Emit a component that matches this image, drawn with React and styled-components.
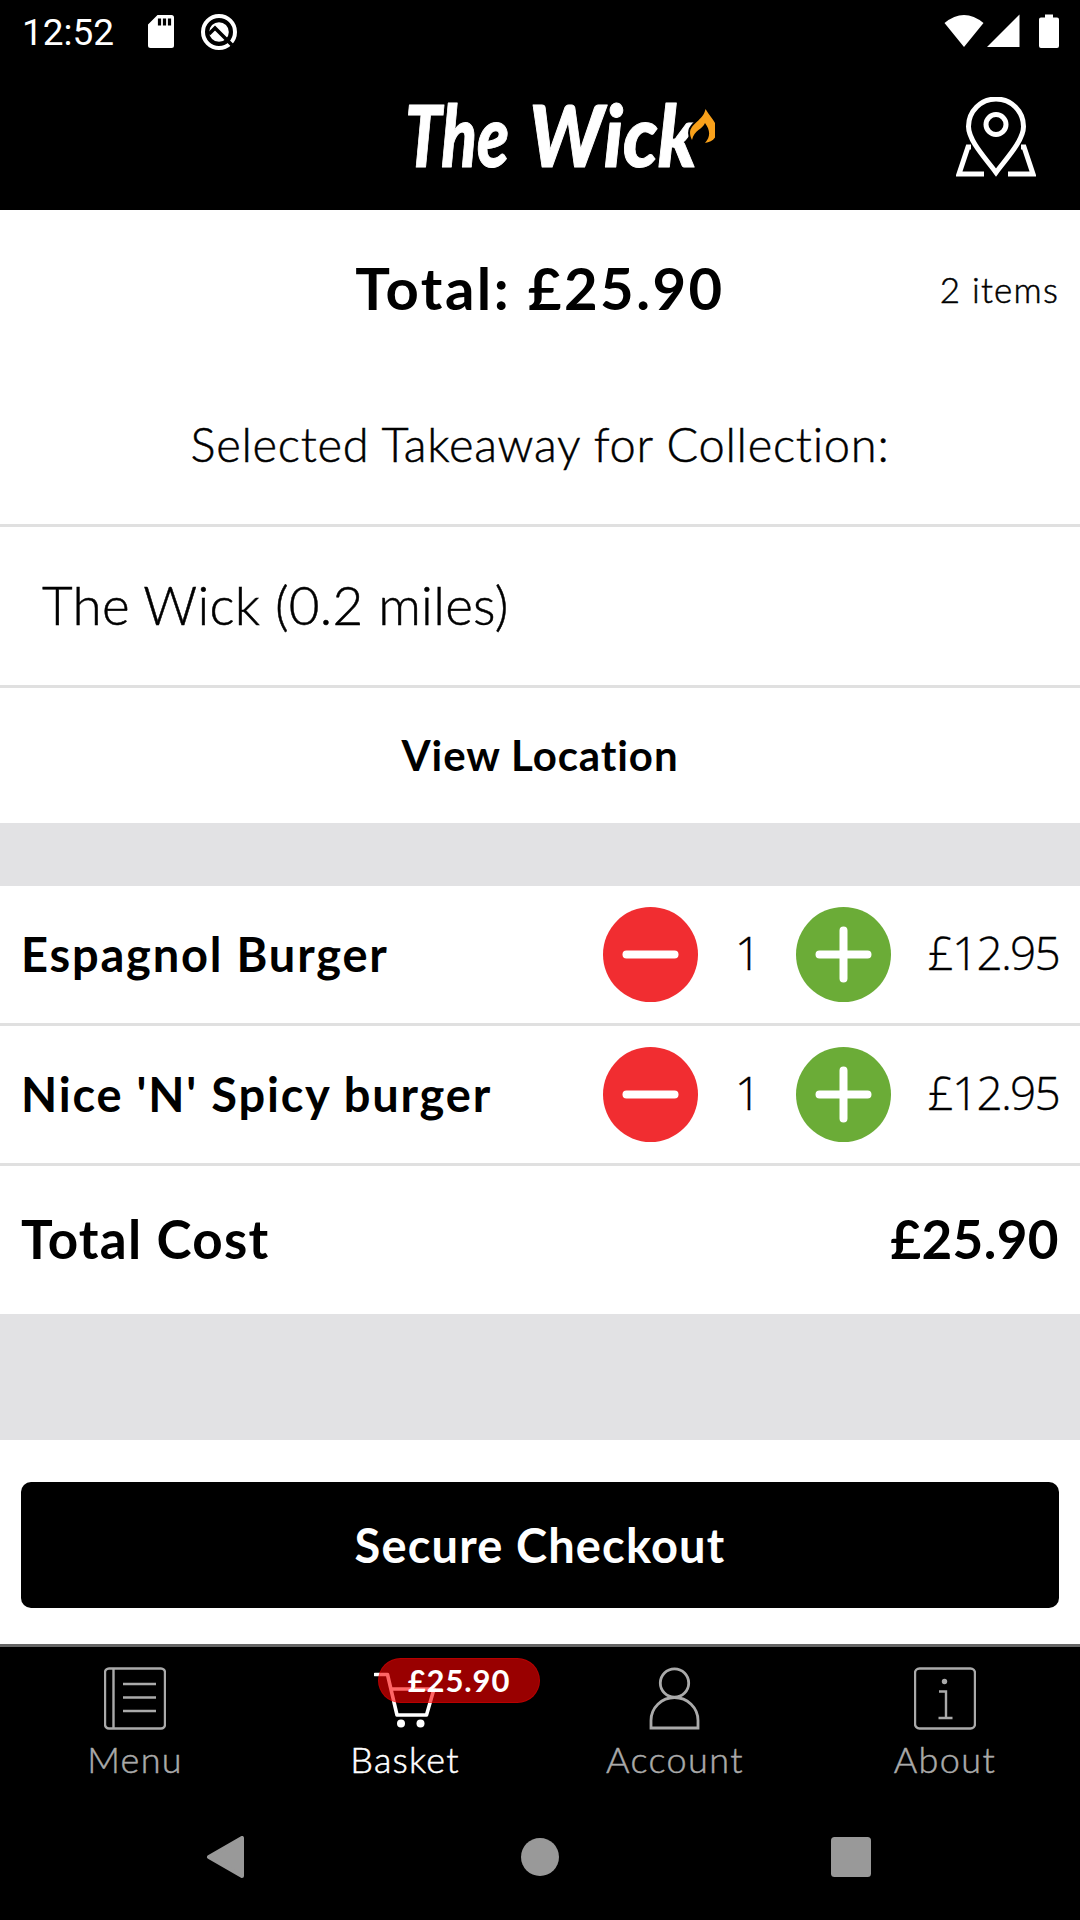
import React from "react";
import styled, { createGlobalStyle } from "styled-components";

const GlobalStyle = createGlobalStyle`
  * {
    box-sizing: border-box;
  }

  body {
    margin: 0;
    background: #000;
    color: #000;
    font-family: Lato, "Open Sans", sans-serif;
  }

  button {
    border: 0;
    padding: 0;
    font-family: inherit;
  }
`;

const Screen = styled.div`
  display: flex;
  flex-direction: column;
  width: 1080px;
  height: 1920px;
  background: #fff;
  overflow: hidden;
`;

const StatusBar = styled.div`
  display: flex;
  align-items: center;
  justify-content: space-between;
  height: 63px;
  padding: 0 21px 0 22px;
  background: #000;
  color: #fff;
`;

const StatusGroup = styled.div`
  display: flex;
  align-items: center;
  gap: 26px;
`;

const Clock = styled.span`
  width: 100px;
  padding-top: 3px;
  font-family: Roboto, sans-serif;
  font-size: 37px;
  line-height: 44px;
`;

const Header = styled.header`
  display: grid;
  grid-template-columns: 120px 1fr 120px;
  align-items: center;
  height: 147px;
  padding-right: 4px;
  background: #000;
`;

const Logo = styled.div`
  display: flex;
  justify-content: center;
  padding-left: 43px;
`;

const Summary = styled.section`
  display: grid;
  grid-template-columns: 200px 1fr 200px;
  align-items: center;
  height: 156px;
  padding: 0 21px;
`;

const Text = styled.span`
  font-size: ${(props) => props.$size}px;
  font-weight: ${(props) => (props.$bold ? 700 : 300)};
  letter-spacing: ${(props) => props.$spacing || 0}px;
  line-height: 1.2;
  white-space: nowrap;
  text-align: ${(props) => props.$align || "left"};
  -webkit-text-stroke: ${(props) => (props.$bold ? 0 : 0.5)}px currentColor;
`;

const ItemCount = styled(Text)`
  padding-top: 2px;
`;

const Row = styled.div`
  display: flex;
  align-items: center;
  justify-content: ${(props) => props.$justify || "flex-start"};
  height: ${(props) => props.$height}px;
  padding: 0 ${(props) => props.$pad || 21}px ${(props) => props.$lift || 0}px;
  border-bottom: ${(props) => (props.$line ? "3px solid #e0e0e0" : "0")};
`;

const Gap = styled.div`
  height: ${(props) => props.$height}px;
  background: #e2e2e4;
`;

const ItemName = styled(Text)`
  flex: 1;
`;

const RoundButton = styled.button`
  width: 95px;
  height: 95px;
  border-radius: 50%;
  background: ${(props) => props.$color};

  svg {
    display: block;
  }
`;

const Quantity = styled(Text)`
  width: 98px;
  padding: 0 0 3px 2px;
  font-family: "Open Sans", sans-serif;
  text-align: center;
  -webkit-text-stroke: 0.3px currentColor;
`;

const Price = styled(Text)`
  width: 168px;
  padding-bottom: 3px;
  font-family: "Open Sans", sans-serif;
  text-align: right;
  -webkit-text-stroke: 0.3px currentColor;
`;

const CheckoutArea = styled.div`
  height: 204px;
  padding: 42px 21px 0;
`;

const CheckoutButton = styled.button`
  width: 100%;
  height: 126px;
  border-radius: 10px;
  background: #000;
  color: #fff;
`;

const TabBar = styled.nav`
  display: grid;
  grid-template-columns: repeat(4, 270px);
  height: 147px;
  border-top: 3px solid #666;
  background: #000;
`;

const Tab = styled.div`
  position: relative;
  display: flex;
  flex-direction: column;
  align-items: center;
  padding-top: 20px;
  color: ${(props) => (props.$active ? "#fff" : "#aaa")};

  > svg {
    margin-bottom: 8px;
  }
`;

const Badge = styled.span`
  position: absolute;
  top: 11px;
  left: 108px;
  display: flex;
  align-items: center;
  justify-content: center;
  width: 162px;
  height: 45px;
  border: 1px solid rgba(255, 0, 0, 0.3);
  border-radius: 23px;
  background: rgba(255, 0, 0, 0.6);
  color: #fff;
`;

const NavBar = styled.div`
  display: flex;
  align-items: center;
  justify-content: space-between;
  flex: 1;
  padding: 3px 209px 0 206px;
  background: #000;
`;

const items = [
  { name: "Espagnol Burger", quantity: 1, price: "£12.95" },
  { name: "Nice 'N' Spicy burger", quantity: 1, price: "£12.95" },
];

const SdCardIcon = () => (
  <svg width="26" height="34" viewBox="0 0 26 34">
    <path
      d="M9.5 0H23.500a2.500 2.500 0 0 1 2.500 2.500V30.500a2.500 2.500 0 0 1-2.500 2.500H2.500A2.500 2.500 0 0 1 0 30.500V9.500z"
      fill="#fff"
    />
    <path d="M11.500 3.500v7M16.500 3.500v7M21.500 3.500v7" stroke="#000" strokeWidth="3.200" />
  </svg>
);

const DebugIcon = () => (
  <svg width="38" height="38" viewBox="0 0 38 38">
    <circle cx="19" cy="19" r="16" fill="none" stroke="#fff" strokeWidth="4" />
    <circle cx="19" cy="19" r="9.800" fill="#fff" />
    <path d="M9 21l6-6 17 17" fill="none" stroke="#000" strokeWidth="3.600" />
  </svg>
);

const StatusIcons = () => (
  <svg width="115" height="36" viewBox="0 0 115 36">
    <path d="M0.500 9Q20 -7 39.500 9L20 33z" fill="#fff" />
    <path d="M75.500 0.500V33H43z" fill="#fff" />
    <path
      d="M101 0.500h8V3.500h4a2 2 0 0 1 2 2V32a2 2 0 0 1-2 2H97a2 2 0 0 1-2-2V5.500a2 2 0 0 1 2-2h4z"
      fill="#fff"
    />
  </svg>
);

const LocationIcon = () => (
  <svg width="80" height="80" viewBox="0 0 80 80" fill="none" stroke="#fff">
    <path
      d="M40 75.500C31 63 12.500 44 12.500 29.500a27.500 27.500 0 0 1 55 0C67.500 44 49 63 40 75.500z"
      strokeWidth="5"
    />
    <circle cx="40" cy="27.500" r="10" strokeWidth="5" />
    <path d="M15 50H12L3 77H28M65 50h3l9 27H52" strokeWidth="5" />
  </svg>
);

const WickLogo = () => (
  <svg width="310" height="120" viewBox="0 -17 310 120">
    <g
      fill="#fff"
      stroke="#fff"
      strokeWidth="1"
      strokeLinejoin="round"
      fontFamily="Lato, sans-serif"
      fontWeight="900"
      fontStyle="italic"
      fontSize="86"
    >
      <text x="0" y="73" textLength="104" lengthAdjust="spacingAndGlyphs">
        The
      </text>
      <text x="124" y="73" textLength="168" lengthAdjust="spacingAndGlyphs">
        Wick
      </text>
    </g>
    <path
      d="M287 46C279 30 298 29 300.500 15C306 24 313 30 312 38C311 45 306 48 300 49C306 42 305 36 300 29C298 35 289 36 287 46z"
      fill="#f9a11b"
      stroke="#000"
      strokeWidth="4"
      paintOrder="stroke"
    />
  </svg>
);

const MenuIcon = () => (
  <svg width="62" height="63" viewBox="0 0 62 63" fill="none" stroke="currentColor">
    <rect x="1" y="1.500" width="60" height="60" rx="4" strokeWidth="2.400" />
    <path d="M9.500 1v61M19 17h33M19 30.500h33M19 44h33" strokeWidth="2.400" />
  </svg>
);

const BasketIcon = () => (
  <svg width="62" height="63" viewBox="0 0 62 63" fill="none" stroke="currentColor">
    <path
      d="M1 7.500h12.500L23 48H52.500L60 22H18"
      strokeWidth="3.600"
      strokeLinecap="round"
      strokeLinejoin="round"
    />
    <circle cx="27" cy="56.500" r="4" fill="currentColor" stroke="none" />
    <circle cx="46.500" cy="56.500" r="4" fill="currentColor" stroke="none" />
  </svg>
);

const AccountIcon = () => (
  <svg width="64" height="63" viewBox="0 0 64 63" fill="none" stroke="currentColor">
    <circle cx="31.500" cy="16" r="14.200" strokeWidth="2.800" />
    <path d="M8 61V53.500a23.500 23 0 0 1 47 0V61z" strokeWidth="2.800" />
  </svg>
);

const AboutIcon = () => (
  <svg width="62" height="63" viewBox="0 0 62 63" fill="none" stroke="currentColor">
    <rect x="1" y="1.500" width="60" height="60" rx="4.500" strokeWidth="2.400" />
    <path d="M25 24.500h7V51M24.500 51h14" strokeWidth="2.400" />
    <circle cx="30.500" cy="14.500" r="2.700" fill="currentColor" stroke="none" />
  </svg>
);

const MinusIcon = () => (
  <svg width="95" height="95" viewBox="0 0 95 95">
    <path d="M23.500 47.500h48" stroke="#fff" strokeWidth="8" strokeLinecap="round" />
  </svg>
);

const PlusIcon = () => (
  <svg width="95" height="95" viewBox="0 0 95 95">
    <path
      d="M23.500 47.500h48M47.500 23.500v48"
      stroke="#fff"
      strokeWidth="8"
      strokeLinecap="round"
    />
  </svg>
);

const App = () => {
  return (
    <Screen>
      <GlobalStyle />
      <StatusBar>
        <StatusGroup>
          <Clock>12:52</Clock>
          <SdCardIcon />
          <DebugIcon />
        </StatusGroup>
        <StatusIcons />
      </StatusBar>

      <Header>
        <span />
        <Logo>
          <WickLogo />
        </Logo>
        <LocationIcon />
      </Header>

      <Summary>
        <span />
        <Text $size={58} $bold $align="center" $spacing={2.5}>Total: £25.90</Text>
        <ItemCount $size={35} $align="right" $spacing={1.2}>2 items</ItemCount>
      </Summary>
      <Row $height={161} $lift={2} $justify="center" $line>
        <Text $size={47} $spacing={0.74}>Selected Takeaway for Collection:</Text>
      </Row>
      <Row $height={161} $lift={2} $pad={42} $line>
        <Text $size={53} $spacing={0.27}>The Wick (0.2 miles)</Text>
      </Row>
      <Row $height={135} $justify="center">
        <Text $size={42} $bold $spacing={0.9}>View Location</Text>
      </Row>
      <Gap $height={63} />

      {items.map((item) => (
        <Row key={item.name} $height={140} $line>
          <ItemName $size={47} $bold $spacing={1.8}>{item.name}</ItemName>
          <RoundButton $color="#f12d31" aria-label="Remove one">
            <MinusIcon />
          </RoundButton>
          <Quantity $size={46}>{item.quantity}</Quantity>
          <RoundButton $color="#6bac37" aria-label="Add one">
            <PlusIcon />
          </RoundButton>
          <Price $size={46} $spacing={-1.8}>{item.price}</Price>
        </Row>
      ))}
      <Row $height={148} $lift={2} $justify="space-between">
        <Text $size={53} $bold $spacing={1.25}>Total Cost</Text>
        <Text $size={53} $bold $spacing={0.4}>£25.90</Text>
      </Row>
      <Gap $height={126} />

      <CheckoutArea>
        <CheckoutButton>
          <Text $size={47} $bold $spacing={1.15}>Secure Checkout</Text>
        </CheckoutButton>
      </CheckoutArea>

      <TabBar>
        <Tab>
          <MenuIcon />
          <Text $size={36} $spacing={1.3}>Menu</Text>
        </Tab>
        <Tab $active>
          <BasketIcon />
          <Badge>
            <Text $size={31} $bold $spacing={0.9}>£25.90</Text>
          </Badge>
          <Text $size={36} $spacing={1.2}>Basket</Text>
        </Tab>
        <Tab>
          <AccountIcon />
          <Text $size={36} $spacing={1.4}>Account</Text>
        </Tab>
        <Tab>
          <AboutIcon />
          <Text $size={36} $spacing={1.4}>About</Text>
        </Tab>
      </TabBar>

      <NavBar>
        <svg width="43" height="42" viewBox="0 0 43 42">
          <path d="M3 21L36 2V40z" fill="#999" stroke="#999" strokeWidth="4" strokeLinejoin="round" />
        </svg>
        <svg width="38" height="38" viewBox="0 0 38 38">
          <circle cx="19" cy="19" r="19" fill="#999" />
        </svg>
        <svg width="40" height="40" viewBox="0 0 40 40">
          <rect width="40" height="40" rx="3.500" fill="#999" />
        </svg>
      </NavBar>
    </Screen>
  );
};

export default App;
